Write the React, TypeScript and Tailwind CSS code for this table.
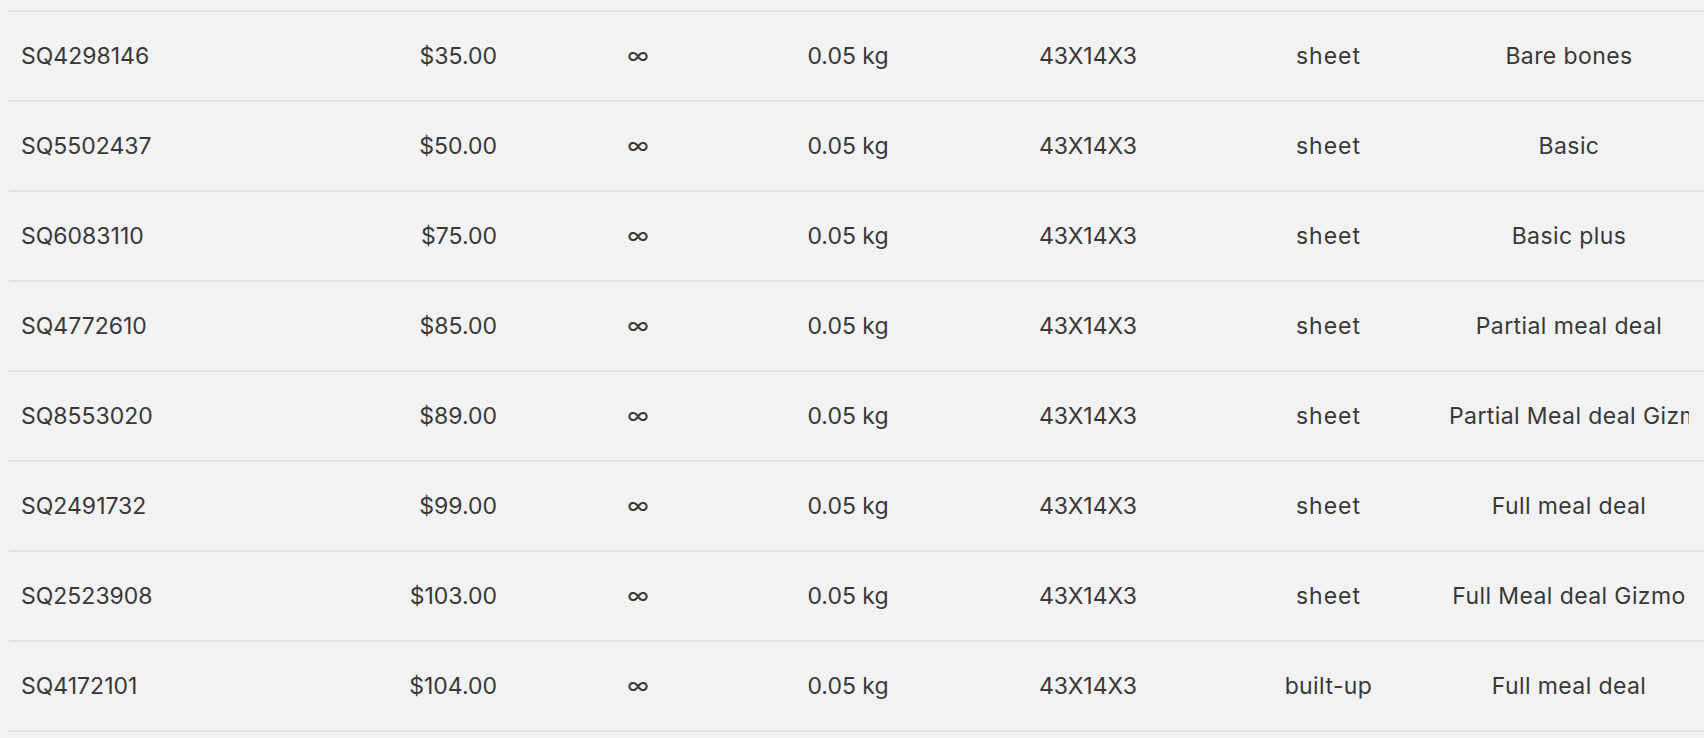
import React from "react";

const rows = [
  ["SQ4298146", "$35.00", "sheet", "Bare bones"],
  ["SQ5502437", "$50.00", "sheet", "Basic"],
  ["SQ6083110", "$75.00", "sheet", "Basic plus"],
  ["SQ4772610", "$85.00", "sheet", "Partial meal deal"],
  ["SQ8553020", "$89.00", "sheet", "Partial Meal deal Gizmo"],
  ["SQ2491732", "$99.00", "sheet", "Full meal deal"],
  ["SQ2523908", "$103.00", "sheet", "Full Meal deal Gizmo"],
  ["SQ4172101", "$104.00", "built-up", "Full meal deal"],
];

export default function App() {
  return (
    <div
      className="w-[1704px] h-[738px] overflow-hidden bg-[#f2f2f2] pt-[10px] pl-[9px] text-[23px] text-[#383838]"
      style={{ fontFamily: "Inter, 'Noto Sans', sans-serif" }}
    >
      <div className="border-b-2 border-[#e3e3e3]">
        {rows.map((r) => (
          <div
            key={r[0]}
            className="grid grid-cols-[260px_279px_180px_240px_240px_241px_240px_1fr] h-[90px] items-center border-t-2 border-[#e3e3e3]"
          >
            <div className="pl-[12px] whitespace-nowrap">{r[0]}</div>
            <div className="pr-[51px] text-right whitespace-nowrap">{r[1]}</div>
            <div className="text-center">∞</div>
            <div className="text-center whitespace-nowrap">0.05 kg</div>
            <div className="text-center whitespace-nowrap">43X14X3</div>
            <div className={"text-center whitespace-nowrap " + (r[2] === "sheet" ? "tracking-[1px]" : "tracking-[0.4px]")}>{r[2]}</div>
            <div className="text-center whitespace-nowrap overflow-hidden tracking-[0.4px]">{r[3]}</div>
            <div />
          </div>
        ))}
      </div>
    </div>
  );
}
